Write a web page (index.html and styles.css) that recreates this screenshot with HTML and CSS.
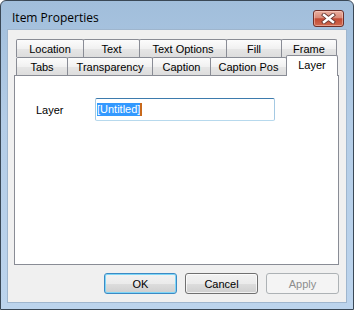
FILE: index.html
```html
<!DOCTYPE html>
<html>
<head>
<meta charset="utf-8">
<link rel="stylesheet" href="styles.css">
</head>
<body>
<div class="window">
  <div class="titlebar">
    <span class="title">Item Properties</span>
    <div class="close">
      <svg width="15" height="11" viewBox="0 0 15 11">
        <path d="M3 2 L12 9 M12 2 L3 9" stroke="#6a3a34" stroke-width="4.2" stroke-linecap="square" fill="none"/>
        <path d="M3 2 L12 9 M12 2 L3 9" stroke="#ffffff" stroke-width="2.4" stroke-linecap="square" fill="none"/>
      </svg>
    </div>
  </div>
  <div class="client">
    <div class="tabs">
      <div class="tabrow">
        <div class="tab w-location">Location</div>
        <div class="tab w-text">Text</div>
        <div class="tab w-textopt">Text Options</div>
        <div class="tab w-fill">Fill</div>
        <div class="tab w-frame">Frame</div>
      </div>
      <div class="tabrow">
        <div class="tab w-tabs">Tabs</div>
        <div class="tab w-transp">Transparency</div>
        <div class="tab w-caption">Caption</div>
        <div class="tab w-cappos">Caption Pos</div>
        <div class="tab w-layer selected">Layer</div>
      </div>
    </div>
    <div class="panel">
      <div class="field">
        <span class="label">Layer</span>
        <div class="input"><span class="sel">[Untitled]</span><span class="caret"></span></div>
      </div>
    </div>
    <div class="buttons">
      <div class="btn default">OK</div>
      <div class="btn">Cancel</div>
      <div class="btn disabled">Apply</div>
    </div>
  </div>
</div>
</body>
</html>
```
FILE: styles.css
```css
html, body {
  margin: 0;
  padding: 0;
  background: #ffffff;
}
.window {
  width: 354px;
  height: 310px;
  box-sizing: border-box;
  border: 1px solid #3a4856;
  border-radius: 6px 6px 0 0;
  background: linear-gradient(#a1bedb, #b4cde7 40%, #bcd4ed);
  display: flex;
  flex-direction: column;
  overflow: hidden;
}
.titlebar {
  height: 29px;
  display: flex;
  align-items: flex-start;
  flex-shrink: 0;
}
.title {
  font-family: "Open Sans", sans-serif;
  font-size: 12px;
  line-height: 16px;
  color: #000;
  margin: 9px 0 0 11px;
}
.close {
  margin: 9px 9px 0 auto;
  width: 31px;
  height: 17px;
  box-sizing: border-box;
  border: 1px solid #6d2f28;
  border-radius: 3px;
  background: linear-gradient(#eab0a0, #d98a78 45%, #c24a33 52%, #d06a50);
  box-shadow: inset 0 0 0 1px rgba(255, 220, 210, 0.45);
  display: flex;
  align-items: center;
  justify-content: center;
}
.close svg {
  display: block;
}
.client {
  margin: 0 7px 7px 7px;
  height: 272px;
  box-sizing: border-box;
  background: #f0f0f0;
  padding: 9px 7px 8px 6px;
  display: flex;
  flex-direction: column;
  box-shadow: 0 0 0 1px #9fb6ce;
}
.tabs {
  margin-left: 2px;
}
.tabrow {
  display: flex;
  height: 18px;
  align-items: flex-start;
}
.tab {
  box-sizing: border-box;
  height: 18px;
  border: 1px solid #898c95;
  border-bottom: none;
  border-radius: 2px 2px 0 0;
  margin-left: -1px;
  background: linear-gradient(#fcfcfc, #f1f1f1 50%, #e6e6e6 52%, #dddddd);
  font-family: "Liberation Sans", Arial, sans-serif;
  font-size: 11px;
  line-height: 1;
  color: #000;
  display: flex;
  align-items: center;
  justify-content: center;
  padding-top: 1px;
}
.tab:first-child {
  margin-left: 0;
}
.w-location { width: 68px; }
.w-text { width: 57px; }
.w-textopt { width: 88px; }
.w-fill { width: 56px; }
.w-frame { width: 56px; }
.w-tabs { width: 52px; }
.w-transp { width: 86px; }
.w-caption { width: 59px; }
.w-cappos { width: 77px; }
.w-layer { width: 52px; }
.tab.selected {
  height: 21px;
  margin-top: -2px;
  background: #ffffff;
  position: relative;
  z-index: 1;
  padding-top: 0;
  padding-bottom: 2px;
}
.panel {
  height: 190px;
  box-sizing: border-box;
  border: 1px solid #898c95;
  background: #ffffff;
  padding: 22px 0 0 21px;
}
.field {
  display: flex;
  align-items: center;
}
.label {
  width: 59px;
  font-family: "Liberation Sans", Arial, sans-serif;
  font-size: 11px;
  color: #000;
}
.input {
  width: 180px;
  height: 23px;
  box-sizing: border-box;
  border: 1px solid;
  border-color: #3d7bad #a4c9e3 #b7d9ed #a4c9e3;
  border-radius: 2px;
  padding: 0 0 0 1px;
  display: flex;
  align-items: center;
  background: #fff;
}
.sel {
  background: #3399ff;
  color: #ffffff;
  font-family: "Liberation Sans", Arial, sans-serif;
  font-size: 11px;
  line-height: 13px;
  height: 13px;
}
.caret {
  width: 2px;
  height: 13px;
  background: #c8691c;
}
.buttons {
  margin-top: 8px;
  display: flex;
  justify-content: flex-end;
  gap: 8px;
}
.btn {
  width: 73px;
  height: 21px;
  box-sizing: border-box;
  border: 1px solid #707070;
  border-radius: 3px;
  background: linear-gradient(#f2f2f2, #ebebeb 50%, #dddddd 52%, #cfcfcf);
  box-shadow: inset 0 0 0 1px rgba(255, 255, 255, 0.7);
  font-family: "Liberation Sans", Arial, sans-serif;
  font-size: 11px;
  color: #000;
  display: flex;
  align-items: center;
  justify-content: center;
}
.btn.default {
  border-color: #3c8ac4;
  box-shadow: inset 0 0 0 1px #7fd6f7;
}
.btn.disabled {
  border-color: #adb2b5;
  background: #f4f4f4;
  box-shadow: none;
  color: #8d8d8d;
}
```
